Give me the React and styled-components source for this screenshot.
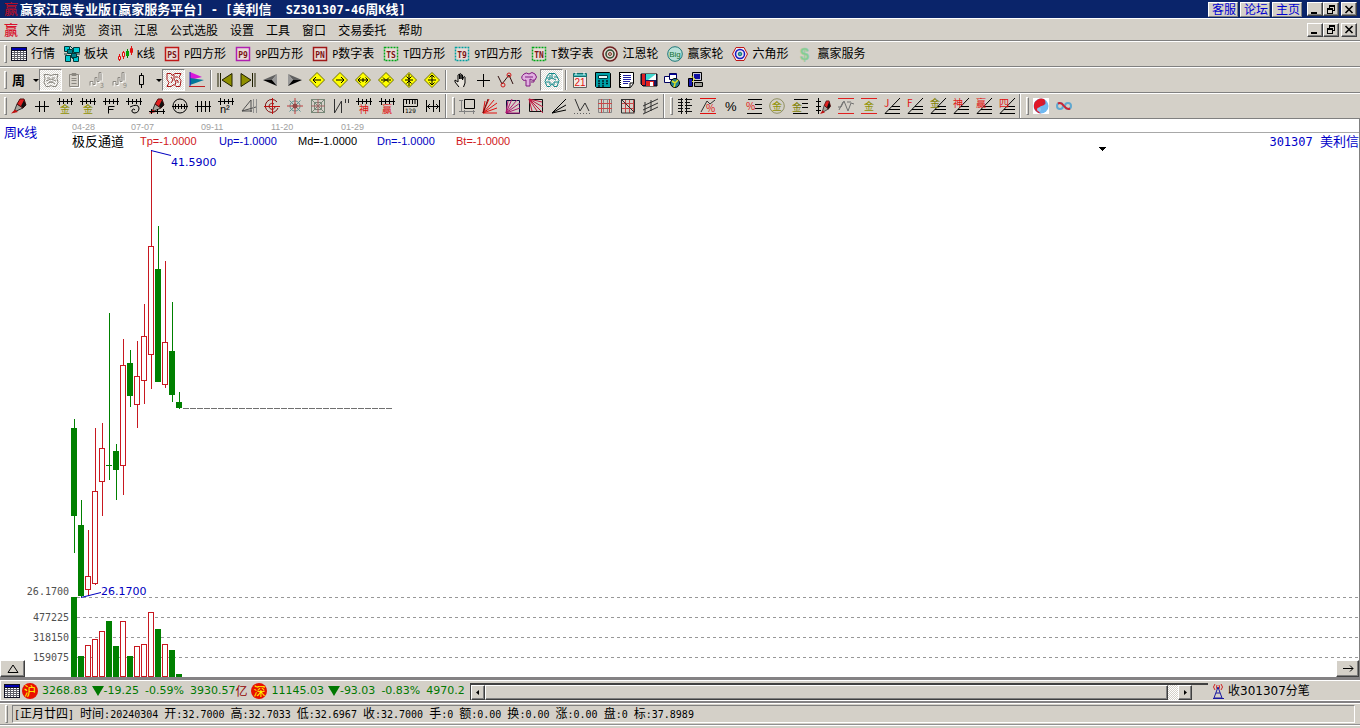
import styled, { createGlobalStyle, css } from "styled-components";

const GlobalStyle = createGlobalStyle`
  * { box-sizing: border-box; }
  body {
    margin: 0;
    background: #d4d0c8;
    color: #000;
    font-family: "Noto Sans CJK SC", sans-serif;
    font-size: 12px;
    line-height: 14px;
  }
  button {
    margin: 0;
    padding: 0;
    border: 0;
    background: none;
    color: inherit;
    font: inherit;
    flex: none;
  }
  svg { display: block; flex: none; overflow: visible; }
`;

const raised = css`
  background: #d4d0c8;
  border: 1px solid;
  border-color: #fff #404040 #404040 #fff;
  box-shadow: inset -1px -1px 0 #808080;
`;

const Page = styled.div`
  min-height: 100vh;
  display: flex;
  flex-direction: column;
`;

/* ---------- mixed text ---------- */

const Text = styled.span`
  white-space: pre;
  font-size: ${(p) => (p.$big ? 13 : 12)}px;
  color: ${(p) => p.$color || "inherit"};
  font-weight: ${(p) => (p.$bold ? 700 : 400)};
`;

const Latin = styled.span`
  font-family: "DejaVu Sans Mono", monospace;
  font-size: ${(p) => (p.$big ? 12 : 10)}px;
`;

// half-width letters use the mono font, full-width ones keep the CJK font
const Mixed = ({ children, big, bold, color }) => (
  <Text $big={big} $bold={bold} $color={color}>
    {children.split(/([\u3400-\u9fff]+)/).map((part, i) =>
      i % 2 ? (
        part
      ) : (
        <Latin key={i} $big={big}>
          {part}
        </Latin>
      )
    )}
  </Text>
);

/* ---------- title + menu ---------- */

const TitleBar = styled.header`
  height: 18px;
  display: flex;
  align-items: center;
  padding: 0 3px;
  background: #0a246a;
  color: #fff;
`;

const MenuBar = styled.nav`
  height: 23px;
  display: flex;
  align-items: center;
  padding: 0 3px;
  border-top: 1px solid #fff;
  border-bottom: 1px solid #808080;
`;

const MenuItems = styled.div`
  display: flex;
  gap: 12px;
  margin-left: 7px;
`;

const TitleText = styled.h1`
  margin: 0 0 0 1px;
  font-size: 13px;
  line-height: 18px;
`;

const Spacer = styled.div`
  flex: 1;
`;

const LinkButtons = styled.div`
  display: flex;
  gap: 2px;
  margin-right: 5px;

  button {
    width: 30px;
    height: 15px;
    padding-left: 2px;
    line-height: 12px;
    color: #0000d0;
    background: #d4d0c8;
    border: 1px solid;
    border-color: #fff #808080 #808080 #fff;
  }
`;

const WinButton = styled.button`
  ${raised}
  width: 16px;
  height: 14px;
  display: grid;
  place-items: center;
  margin-left: ${(p) => (p.$gap ? 2 : 0)}px;
`;

const WindowButtons = () => (
  <>
    <WinButton aria-label="最小化">
      <svg width="10" height="9" shapeRendering="crispEdges">
        <path d="M1 7h6v2h-6z" />
      </svg>
    </WinButton>
    <WinButton aria-label="还原">
      <svg width="10" height="9" shapeRendering="crispEdges">
        <path d="M3 0h6v6h-2v-1h1v-3h-4v1h-1zM1 3h6v6h-6zM2 5v3h4v-3z" fillRule="evenodd" />
      </svg>
    </WinButton>
    <WinButton aria-label="关闭" $gap>
      <svg width="10" height="9">
        <path d="M1.500 1l7 7M8.500 1l-7 7" stroke="#000" strokeWidth="1.600" />
      </svg>
    </WinButton>
  </>
);

const Logo = ({ dark }) => (
  <svg width="16" height="16" viewBox="0 0 16 16">
    <text x="1" y="13" fontSize="14" fontWeight="500" fill={dark ? "#b0102c" : "#d8102c"}>
      赢
    </text>
  </svg>
);

/* ---------- toolbars ---------- */

const Toolbar = styled.div`
  height: 26px;
  display: flex;
  align-items: center;
  padding-left: 4px;
  border-top: 1px solid #fff;
  border-bottom: 1px solid #808080;
`;

const Grip = styled.i`
  width: 3px;
  height: 18px;
  flex: none;
  border: 1px solid;
  border-color: #fff #808080 #808080 #fff;
`;

const Divider = styled.i`
  width: 2px;
  height: ${(p) => (p.$tall ? 24 : 20)}px;
  flex: none;
  border-left: 1px solid #808080;
  border-right: 1px solid #fff;
  margin: 0 ${(p) => (p.$tall ? 5 : 1)}px 0 ${(p) => (p.$tall ? 1 : 2)}px;
`;

const LabelItems = styled.div`
  display: flex;
  gap: 9px;
  margin-left: 4px;
`;

const LabelButton = styled.button`
  display: flex;
  align-items: center;
  gap: 4px;
`;

const IconButton = styled.button`
  width: ${(p) => p.$width || 23}px;
  height: 22px;
  display: grid;
  place-items: center;
  ${(p) =>
    p.$pressed &&
    css`
      background: repeating-conic-gradient(#fff 0 25%, #dedbd5 0 50%) 0 0 / 2px 2px;
      border: 1px solid;
      border-color: #808080 #fff #fff #808080;
    `}
`;

const comb = "M0 3.500h16M2.500 0v7M6.500 1v5M10.500 1v5M14.500 0v7";

const Glyph = ({ c = "#e01010", x = 4, y = 15, s = 10, children }) => (
  <text x={x} y={y} fontSize={s} fill={c} stroke="none">
    {children}
  </text>
);

const Framed = ({ c, t, dash }) => (
  <g>
    <rect x="1.500" y="1.500" width="13" height="13" fill="#e8dcd8" stroke={c} strokeDasharray={dash ? "2 1" : undefined} strokeWidth="1.500" />
    <text x="8" y="11.500" textAnchor="middle" fontSize="8" fontWeight="700" fontFamily="DejaVu Sans Mono" fill="#7c1414" stroke="none">
      {t}
    </text>
  </g>
);

const Diamond = ({ d }) => (
  <g>
    <path d="M8 .5L15.500 8L8 15.500L.5 8z" fill="#ffff00" stroke="#707000" />
    <path d={d} stroke="#000" />
  </g>
);

const Crayon = () => (
  <g>
    <path d="M3 14L6 6L12 10z" fill="#a8a49c" stroke="#303030" />
    <path d="M6 6L9 1L13 1L15 7L12 10z" fill="#e02020" stroke="#501010" />
    <path d="M12 10L15 7L13 2L10 8z" fill="#101010" stroke="none" />
    <path d="M0 15.500l4-4l3 2.500z" fill="#c01010" stroke="none" />
  </g>
);

const Wave = ({ n }) => (
  <g stroke="#fff" fill="none">
    <path d="M2 14.500v-4h3v3h2v-7h2v4h2v-9h2v8" />
    <path d="M1 13.500v-4h3v3h2v-7h2v4h2v-9h2v8" stroke="#8a8780" />
    <Glyph c="#8a8780" x={11} y={16} s={7}>
      {n}
    </Glyph>
  </g>
);

const Rays = ({ c = "#e01010" }) => (
  <path d="M1 15L3 3M1 15L7 1M1 15L12 2M1 15L15 5M1 15L15 10M1 15h14" stroke={c} />
);

const icons = {
  quotes: (
    <g shapeRendering="crispEdges">
      <path d="M0 1h16v14h-16z" fill="#101020" stroke="none" />
      <path d="M1 2h14v2h-14z" fill="#0000b0" stroke="none" />
      <path d="M1 5h14v9h-14z" fill="#fff" stroke="none" />
      <path d="M1 6.500h14M1 8.500h14M1 10.500h14M1 12.500h14M3.500 5v9M6.500 5v9M9.500 5v9M12.500 5v9" stroke="#606068" />
    </g>
  ),
  blocks: (
    <g stroke="#003838">
      <path d="M.5 .5h5v5h-5zM9.500 1.500h6v5h-6zM1.500 9.500h5v6h-5zM9.500 10.500h5v5h-5z" fill="#00c8d0" />
      <path d="M3.500 3.500h5v4h-5zM7.500 7.500h5v4h-5z" fill="#008088" />
      <path d="M6 0l3 3M6 9l3 4M0 8h3M13 8h3" />
    </g>
  ),
  kline: (
    <g>
      <path d="M2.500 8v7M6.500 5v8" stroke="#e01010" />
      <path d="M1.500 10.500h2v3h-2zM5.500 6.500h2v4h-2zM13.500 2.500h2v4h-2z" fill="#f0e0d8" stroke="#e01010" />
      <path d="M10.500 3v9" stroke="#008000" />
      <path d="M14.500 0v9" stroke="#e01010" />
      <path d="M9 5h3v5h-3z" fill="#00a000" stroke="none" />
    </g>
  ),
  ps: <Framed c="#c01818" t="PS" />,
  p9: <Framed c="#b020b0" t="P9" />,
  pn: <Framed c="#a01818" t="PN" />,
  ts: <Framed c="#00a818" t="TS" dash />,
  t9: <Framed c="#00a0a0" t="T9" dash />,
  tn: <Framed c="#00a818" t="TN" dash />,
  wheel: (
    <g>
      <circle cx="8" cy="8" r="7" fill="#e0d8d0" stroke="#702020" strokeWidth="1.600" />
      <circle cx="8" cy="8" r="4" stroke="#304830" strokeWidth="1.500" />
      <circle cx="8" cy="8" r="1.500" stroke="#903030" fill="#b0d8b0" />
    </g>
  ),
  big: (
    <g>
      <circle cx="8" cy="8" r="7.300" fill="#b8e0d8" stroke="#207878" />
      <text x="8" y="11" textAnchor="middle" fontSize="8" fontFamily="Liberation Sans" fill="#107030" stroke="none">
        Big
      </text>
    </g>
  ),
  hex: (
    <g>
      <path d="M4 1.500h8L15.500 8L12 14.500h-8L.5 8z" fill="#f0e8f0" stroke="#c01818" />
      <circle cx="8" cy="8" r="4.500" stroke="#1818c0" strokeWidth="1.500" />
      <circle cx="8" cy="8" r="1.800" fill="#40a0c0" stroke="#107070" />
    </g>
  ),
  dollar: (
    <text x="3" y="14" fontSize="16" fontWeight="700" fontFamily="Liberation Sans" fill="#80d090" stroke="#a8c8a8" strokeWidth=".5">
      $
    </text>
  ),

  week: (
    <text x="2" y="13" fontSize="13" fontWeight="700" fill="#000" stroke="none">
      周
    </text>
  ),
  drop: <path d="M5 7h6l-3 3z" fill="#000" stroke="none" />,
  link: (
    <g stroke="#8a8780">
      <path d="M1 2.500h4l3 1l3-1h4l-1 4l1 4l-2 4h-3l-2-1l-2 1h-3l-2-4l1-4zM4 6h3M9 6h3M3 9l5-2l5 2M4 12q4-4 8 0M6 10h4" />
    </g>
  ),
  clip: (
    <g stroke="#8a8780">
      <path d="M3.500 2.500h9v12h-9zM6 1.500h4v2h-4zM5.500 6.500h5M5.500 8.500h5M5.500 11.500h5" />
      <path d="M13.500 3v12.500h-9" stroke="#fff" />
    </g>
  ),
  wave3: <Wave n="3" />,
  wave9: <Wave n="9" />,
  candle: <path d="M6.500 3.500h4v9h-4zM8.500 1v3M8.500 13v3" stroke="#000" />,
  puzzle: (
    <path d="M1 1.500h4l1 2l3-2h6l-2 4l2 3l-1 6h-4l-2-2l-3 2h-4l2-4l-2-3zM5 5l2 3l-2 3M9 5h3M10 8q3 0 2 3M8 3v4l2 3l-1 3" stroke="#a81818" />
  ),
  flag: (
    <g>
      <path d="M1 0L13 5L1 8z" fill="#d818d8" stroke="none" />
      <path d="M1 6L15 8L1 13z" fill="#007898" stroke="none" />
      <path d="M1 0v14" stroke="#1818c0" />
      <path d="M0 14.500h16" stroke="#c02020" />
    </g>
  ),
  first: <path d="M1 1v14M3.500 1v14M15 1.500L5 8L15 14.500z" fill="#909000" stroke="#202000" />,
  last: <path d="M15 1v14M12.500 1v14M1 1.500L11 8L1 14.500z" fill="#909000" stroke="#202000" />,
  prev: (
    <g stroke="none">
      <path d="M0 8L14 2L9 8z" fill="#606060" />
      <path d="M9 8L14 2v12z" fill="#989898" />
      <path d="M0 8h9l5 6z" fill="#000" />
    </g>
  ),
  next: (
    <g stroke="none">
      <path d="M16 8L2 2L7 8z" fill="#606060" />
      <path d="M7 8L2 2v12z" fill="#989898" />
      <path d="M16 8h-9l-5 6z" fill="#000" />
    </g>
  ),
  dLeft: <Diamond d="M4 8h8M7 5L4 8l3 3" />,
  dRight: <Diamond d="M4 8h8M9 5l3 3l-3 3" />,
  dWide: <Diamond d="M3 8h10M5.500 5.500L3 8l2.500 2.500M10.500 5.500L13 8l-2.500 2.500M8 6v4" />,
  dNarrow: <Diamond d="M3 8h10M5 5.500L7.500 8L5 10.500M11 5.500L8.500 8l2.500 2.500" />,
  dShrink: <Diamond d="M4 8h8M8 2v12M5.500 4.500L8 7l2.500-2.500M5.500 11.500L8 9l2.500 2.500" />,
  dGrow: <Diamond d="M4 8h8M8 3v10M5.500 5.500L8 3l2.500 2.500M5.500 10.500L8 13l2.500-2.500" />,
  hand: (
    <path d="M5 15l-4-5v-2l3 2v-7q1-1 1.500 0v4v-5q1-1 1.500 0v5v-4q1-1 1.500 0v5l1-3q1-1 1.500 0v6l-1.500 4" fill="#e8e4dc" stroke="#000" transform="translate(2 0)" />
  ),
  cross: <path d="M8.500 2v13M2 8.500h13" stroke="#000" />,
  zigzag: (
    <g>
      <path d="M0 4l4 8l7-9l4 9" stroke="#301010" />
      <circle cx="5" cy="13" r="2" stroke="#d01818" />
      <circle cx="11" cy="3" r="2" stroke="#d01818" />
    </g>
  ),
  cloud: (
    <g stroke="#801880">
      <path d="M2 8q-3-3 1-6q2-2 5 0q3-3 6 0q3 3 0 6q-3 1-5-1v7h-4v-6q-2 1-3 0zM4 5h8" fill="#e0b0e0" />
      <path d="M10 10h3v-2" />
    </g>
  ),
  brain: (
    <path d="M8 1v5l-4 2M8 6l4 2M5 1.500h6l2 3l2 4l-2 6h-3l-2-3l-2 3h-3l-2-5l2-5zM3 6h3v-3M2 10h4v3M13 5h-3M14 10h-4v3" stroke="#108888" />
  ),
  calendar: (
    <g>
      <path d="M1.500 3.500h13v12h-13z" fill="#f4ece8" stroke="#606060" />
      <path d="M1.500 1.500h13v3h-13z" fill="#50b8b8" stroke="#107070" />
      <path d="M4 0v3M12 0v3" stroke="#fff" />
      <text x="8" y="14" textAnchor="middle" fontSize="10" fontFamily="Liberation Sans" fill="#e01010" stroke="none">
        21
      </text>
    </g>
  ),
  calc: (
    <g>
      <path d="M.5 .5h14l1 1v14h-14l-1-1z" fill="#00a0a8" stroke="#000" />
      <path d="M3.500 3.500h9v3h-9z" fill="#e8f8f8" stroke="#003840" />
      <path d="M3 9h2M7 9h2M11 9h2M3 11.500h2M7 11.500h2M11 11.500h2M3 14h2M7 14h2" stroke="#002028" strokeWidth="1.500" />
    </g>
  ),
  note: (
    <g>
      <path d="M1.500 .5h14v11l-3 4h-11z" fill="#fff" stroke="#000" />
      <path d="M5 3.500h8M5 5.500h8M5 7.500h8M5 9.500h7M5 11.500h5" stroke="#2020a0" />
      <path d="M2 0v16" stroke="#000" strokeDasharray="1 1" strokeWidth="2" />
      <path d="M12 15v-4h4" stroke="#000" />
    </g>
  ),
  disk: (
    <g>
      <path d="M0 2h16v12h-14l-2-2z" fill="#181860" stroke="#000" />
      <path d="M1 2h3v11h-3z" fill="#e02020" stroke="none" />
      <path d="M5 2h10v6h-10z" fill="#40d8d0" stroke="none" />
      <path d="M15 2v6h-8z" fill="#fff" stroke="none" />
      <path d="M5 9h8v5h-8z" fill="#e02020" stroke="none" />
      <path d="M9 10h3v4h-3z" fill="#fff" stroke="none" />
    </g>
  ),
  copyNet: (
    <g>
      <path d="M.5 4.500h7v6h-7z" fill="#fff" stroke="#000060" />
      <path d="M5.500 1.500h7v6h-7z" fill="#fff" stroke="#000060" />
      <path d="M6 2.500h6" stroke="#0000a0" />
      <circle cx="11" cy="11" r="4.500" fill="#208090" stroke="#000" />
      <path d="M8 9l3 2l3-3M10 15l1-3" stroke="#e0e020" strokeWidth="1.600" />
    </g>
  ),
  pc: (
    <g>
      <path d="M5.500 .5h9v8h-9z" fill="#c8c8d8" stroke="#000" />
      <path d="M7 2h6v5h-6z" fill="#1010a0" stroke="none" />
      <path d="M7.500 10.500h8v4h-8z" fill="#a0a098" stroke="#000" />
      <path d="M1.500 6.500h4v8h-4z" fill="#1818b0" stroke="#000" />
      <path d="M4 4l4 3l-3 3" stroke="#e0e020" />
    </g>
  ),

  crayon: <Crayon />,
  ticks2: <path d="M1 8.500h14M5.500 3v11M10.500 3v11" stroke="#000" />,
  ticks4: <path d="M0 8.500h16M2.500 3v11M6.500 3v11M10.500 3v11M14.500 3v11" stroke="#000" />,
  combGold: (
    <g>
      <path d={comb} stroke="#000" />
      <Glyph c="#909000" x={3}>金</Glyph>
    </g>
  ),
  combF: (
    <g>
      <path d={comb} stroke="#000" />
      <path d="M5.500 15.500v-7h6M5.500 11.500h5" stroke="#000" />
    </g>
  ),
  combSpiral: (
    <g>
      <path d={comb} stroke="#000" />
      <path d="M4 9q8-4 9 1q0 5-5 5q-3-1-2-3q2-2 3 0" stroke="#000" />
    </g>
  ),
  crayonTicks: (
    <g>
      <Crayon />
      <path d="M0 13.500h16M2.500 11v5M8.500 11v5M14.500 11v5" stroke="#000" />
    </g>
  ),
  ellipse: (
    <g stroke="#000">
      <circle cx="8" cy="8" r="7" />
      <path d="M0 8.500h16M3.500 6v5M6.500 6v5M9.500 6v5M12.500 6v5" />
    </g>
  ),
  combN: (
    <g>
      <path d={comb} stroke="#000" />
      <text x="2" y="15" fontSize="11" fontFamily="Liberation Sans" fill="#000" stroke="none">n²</text>
    </g>
  ),
  slants: (
    <g stroke="#505050">
      <path d="M1 13L10 2v12M1 13l14-4M1 13h10" />
      <path d="M12.500 1v14M15.500 1v14" stroke="#909090" />
    </g>
  ),
  target: (
    <g stroke="#c01010">
      <path d="M14 10A6.500 6.500 0 1 1 13 4M11 9A3 3 0 1 1 10 6" stroke="#801010" />
      <path d="M0 8.500h16M8.500 0v16" />
    </g>
  ),
  star: (
    <g stroke="#609090">
      <circle cx="8" cy="8" r="5" />
      <path d="M2.500 2.500l11 11M13.500 2.500l-11 11" />
      <path d="M8 0v16M0 8h16" stroke="#c04040" />
      <circle cx="8" cy="8" r="2.500" fill="#904848" stroke="none" />
    </g>
  ),
  web: (
    <g stroke="#788878">
      <path d="M1.500 1.500h13v13h-13zM4.500 4.500h7v7h-7zM1 1l14 14M15 1L1 15" />
      <path d="M8 1v14M1 8h14" stroke="#a06060" />
    </g>
  ),
  parallel: <path d="M1.500 1v14L8.500 3v12M12.500 1v4M15.500 1v4" stroke="#303030" />,
  combShen: (
    <g>
      <path d={comb} stroke="#000" />
      <Glyph x={3}>神</Glyph>
    </g>
  ),
  combWin: (
    <g>
      <path d={comb} stroke="#000" />
      <Glyph x={3}>赢</Glyph>
    </g>
  ),
  ruler: (
    <g stroke="#000">
      <path d="M1.500 1v14M1 1.500h14.500v7M1 8.500h14M4.500 2v4M7.500 2v4M10.500 2v4M13 2v4" />
      <text x="3" y="15" fontSize="6" fontFamily="DejaVu Sans Mono" fill="#000" stroke="none">129</text>
    </g>
  ),
  span: <path d="M1.500 2v12M14.500 2v12M8.500 2v12M2 8.500h12M5 6L2.500 8.500L5 11M11 6l2.500 2.500L11 11" stroke="#000" />,

  crop: (
    <g>
      <path d="M0 2.500h4M2.500 2v11M0 13.500h16M5.500 12v4M14.500 12v4" stroke="#808080" />
      <path d="M5.500 1.500h10v9h-10z" stroke="#000" />
    </g>
  ),
  fanRed: (
    <g>
      <Rays />
      <path d="M1 15L6 1" stroke="#601010" />
    </g>
  ),
  fanBox: (
    <g>
      <path d="M1.500 2.500h13v13h-13z" stroke="#101040" />
      <Rays c="#b01870" />
    </g>
  ),
  fanBoxR: (
    <g>
      <path d="M1.500 1.500h13v12h-13z" stroke="#101010" />
      <path d="M1 1l14 14M1 1l8 12M1 1l14 8M1 1l3 12M1 1l13 3" stroke="#c01840" />
    </g>
  ),
  fanBlack: <path d="M1 15L15 1M1 15L15 7M1 15L15 12" stroke="#000" />,
  vee: (
    <g>
      <path d="M1 1l5 12l5-8l4 8" stroke="#303030" />
      <path d="M0 15.500h16" stroke="#606060" strokeDasharray="1 2" />
    </g>
  ),
  grid: (
    <g>
      <path d="M1.500 1.500h13v13h-13zM6.500 1v14M10.500 1v14" stroke="#888" />
      <path d="M1 5.500h14M1 10.500h14M4.500 1v14M12.500 1v14" stroke="#c84848" />
    </g>
  ),
  gridDark: (
    <g>
      <path d="M5.500 1v14M13.500 1v14M1 5.500h14M1 10.500h14M9.500 1v14" stroke="#c84848" />
      <path d="M1.500 1.500h13v13M1.500 1v14h13M2 2l12 12" stroke="#303030" />
    </g>
  ),
  channel: <path d="M0 8L15 1M0 12L15 5M0 16L15 9M2 4v11M8 2v11" stroke="#303030" />,
  levels: <path d="M1 1.500h5M1 4.500h5M1 7.500h5M1 10.500h5M1 13.500h5M8 1.500h7M8 4.500h5M8 7.500h7M8 10.500h5M8 13.500h7M4.500 0v16M9.500 0v16" stroke="#101010" />,
  percentTop: (
    <g>
      <path d="M0 .5h16M0 15.500h16" stroke="#e01010" />
      <path d="M1 14L7 3l3 3l5-4" stroke="#303030" />
      <Glyph x={6} y={14}>%</Glyph>
    </g>
  ),
  percent: (
    <text x="2" y="13" fontSize="13" fontFamily="Liberation Sans" fill="#000" stroke="none">%</text>
  ),
  percentLines: (
    <g>
      <path d="M2 1.500h14M9 6.500h7M9 10.500h7M1 15.500h15" stroke="#000" />
      <Glyph x={0} y={12}>%</Glyph>
    </g>
  ),
  coin: (
    <g>
      <circle cx="8" cy="8" r="7.300" stroke="#909060" />
      <Glyph c="#909000" x={3} y={12}>金</Glyph>
    </g>
  ),
  goldLines: (
    <g>
      <path d="M2 1.500h14M10 5.500h6M10 9.500h6M1 15.500h15" stroke="#000" />
      <Glyph c="#808000" x={0} y={13}>金</Glyph>
    </g>
  ),
  crayonAxis: (
    <g>
      <g transform="translate(5 2) scale(.7 .9)">
        <Crayon />
      </g>
      <path d="M3.500 0v16M1 3.500h5M1 8.500h5M1 12.500h5" stroke="#000" />
    </g>
  ),
  sine: (
    <g>
      <path d="M0 .5h16M0 15.500h16" stroke="#e02020" />
      <path d="M0 9h3L6 3l4 10L13 5l3 1M1 12L5 4M9 4h4" stroke="#707070" />
    </g>
  ),
  goldBand: (
    <g>
      <path d="M0 .5h16M0 15.500h16" stroke="#e02020" />
      <Glyph c="#909000" x={3} y={12}>金</Glyph>
    </g>
  ),
  fanJ: <FanGlyph t="J" />,
  fanF: <FanGlyph t="F" />,
  fanGold: <FanGlyph t="金" c="#808000" />,
  fanShen: <FanGlyph t="神" />,
  fanWin: <FanGlyph t="赢" />,
  fanFour: <FanGlyph t="四" />,
  taiji: (
    <g stroke="none">
      <path d="M0 0h16v16h-16z" fill="#fff" />
      <circle cx="8" cy="8" r="7.500" fill="#70b8f0" />
      <path d="M11 1A7.500 7.500 0 1 0 8 15.500A4 4 0 0 1 8 8A4 4 0 0 0 11 1z" fill="#e01828" />
      <circle cx="6" cy="11.500" r="2" fill="#90c8f0" />
      <circle cx="11" cy="5" r="1.500" fill="#c02040" />
    </g>
  ),
  infinity: (
    <g strokeWidth="2">
      <circle cx="4" cy="8" r="3" stroke="#60a8d0" />
      <circle cx="12" cy="8" r="3" stroke="#60a8d0" />
      <path d="M2 5.500Q5 4 8 8Q11 12 14 10.500" stroke="#d02030" />
    </g>
  ),
};

function FanGlyph({ t, c }) {
  return (
    <g>
      <path d="M1 15.500L16 0M8 8.500h8M5 11.500h11M1 15.500h15" stroke="#000" />
      <Glyph x={0} y={9} c={c}>
        {t}
      </Glyph>
    </g>
  );
}

const Icon = ({ name }) => (
  <svg width="16" height="16" viewBox="0 0 16 16" fill="none">
    {icons[name]}
  </svg>
);

const labelTools = [
  ["quotes", "行情"],
  ["blocks", "板块"],
  ["kline", "K线"],
  ["ps", "P四方形"],
  ["p9", "9P四方形"],
  ["pn", "P数字表"],
  ["ts", "T四方形"],
  ["t9", "9T四方形"],
  ["tn", "T数字表"],
  ["wheel", "江恩轮"],
  ["big", "赢家轮"],
  ["hex", "六角形"],
  ["dollar", "赢家服务"],
];

const viewTools =
  "week drop link* clip wave3 wave9 candle drop puzzle* flag | first last prev next dLeft dRight dWide dNarrow dShrink dGrow | hand cross zigzag cloud brain* | calendar calc note disk copyNet pc".split(" ");

const drawTools =
  "crayon ticks2 combGold combGold combF combSpiral crayonTicks ellipse ticks4 combN slants target star web parallel combShen combWin ruler span || crop fanRed fanBox fanBoxR fanBlack vee grid gridDark channel || levels percentTop percent percentLines coin goldLines crayonAxis sine goldBand fanJ fanF fanGold fanShen fanWin fanFour || taiji infinity".split(" ");

// buttons with a drop-down arrow beside them are narrower
const toolWidths = { week: 21, candle: 20, drop: 11 };

const ToolIcons = ({ tools }) =>
  tools.map((tool, i) => {
    if (tool === "|") return <Divider key={i} />;
    if (tool === "||")
      return [<Divider key={i} $tall />, <Grip key={`g${i}`} />];
    const name = tool.replace("*", "");
    return (
      <IconButton key={i} aria-label={name} $pressed={tool !== name} $width={toolWidths[name]}>
        <Icon name={name} />
      </IconButton>
    );
  });

/* ---------- chart ---------- */

// [wick top, body top, body bottom, wick bottom, volume top, rising]
const bars = [
  [419, 428, 516, 553, 597, 0],
  [500, 525, 596, 597, 656, 0],
  [530, 576, 590, 596, 645, 1],
  [428, 491, 584, 585, 639, 1],
  [423, 448, 482, 516, 631, 1],
  [313, 465, 466, 480, 621, 0],
  [444, 451, 470, 500, 646, 0],
  [339, 365, 466, 495, 621, 1],
  [350, 363, 396, 407, 656, 0],
  [341, 376, 405, 428, 646, 1],
  [304, 336, 381, 404, 644, 1],
  [150, 246, 355, 389, 612, 1],
  [226, 269, 382, 382, 629, 0],
  [261, 342, 385, 388, 644, 1],
  [302, 351, 395, 402, 650, 0],
  [392, 402, 408, 409, 674, 0],
];

const levels = [
  [597, 591, "26.1700"],
  [617, 617, "477225"],
  [637, 637, "318150"],
  [657, 657, "159075"],
];

const ChartArea = styled.main`
  position: relative;
  flex: 1;
  background: #fff;
  border-right: 1px solid #808080;
`;

const DateRow = styled.div`
  height: 14px;
  margin-left: 72px;
  padding-top: 2px;
  display: flex;
  border-bottom: 1px solid #a8a8a8;
  font: 9px/12px "Liberation Sans", sans-serif;
  color: #a0a0a0;

  span { width: 70px; }
  span:first-child { width: 59px; }
`;

const Period = styled.div`
  position: absolute;
  left: 4px;
  top: 6px;
`;

const LegendRow = styled.div`
  display: flex;
  align-items: center;
  height: 16px;
  margin-left: 72px;
`;

const LegendName = styled.span`
  width: 68px;
  font-size: 13px;
`;

const LegendValue = styled.span`
  width: 79px;
  font: 11px/14px "Liberation Sans", sans-serif;
  color: ${(p) => p.$color};
`;

const Plot = styled.svg`
  width: 100%;
  height: 528px;
`;

const CornerButton = styled.button`
  ${raised}
  position: absolute;
  bottom: 0;
  ${(p) => (p.$right ? "right: 0;" : "left: 0;")}
  width: ${(p) => (p.$right ? 23 : 25)}px;
  height: 17px;
  display: grid;
  place-items: center;
`;

const Bar = ({ i, bar }) => {
  const [top, open, close, bottom, vol, up] = bar;
  const x = 71 + i * 7;
  if (!up)
    return (
      <g fill="#008000">
        <rect x={x + 3} y={top} width="1" height={bottom - top} />
        <rect x={x} y={open} width="6" height={close - open} />
        <rect x={x} y={vol} width="6" height={677 - vol} />
      </g>
    );
  return (
    <g fill="#c81820">
      <rect x={x + 3} y={top} width="1" height={open - top} />
      <rect x={x + 3} y={close} width="1" height={bottom - close} />
      <rect x={x + 0.5} y={open + 0.5} width="5" height={close - open - 1} fill="#fff" stroke="#c81820" />
      <rect x={x + 0.5} y={vol + 0.5} width="5" height={676 - vol} fill="#fff" stroke="#c81820" />
    </g>
  );
};

const Chart = () => (
  <ChartArea>
    <Period>
      <Mixed big color="#0000c8">周K线</Mixed>
    </Period>
    <DateRow>
      <span>04-28</span>
      <span>07-07</span>
      <span>09-11</span>
      <span>11-20</span>
      <span>01-29</span>
    </DateRow>
    <LegendRow>
      <LegendName>极反通道</LegendName>
      <LegendValue $color="#d01820">Tp=-1.0000</LegendValue>
      <LegendValue $color="#0000c0">Up=-1.0000</LegendValue>
      <LegendValue $color="#000">Md=-1.0000</LegendValue>
      <LegendValue $color="#0000c0">Dn=-1.0000</LegendValue>
      <LegendValue $color="#d01820">Bt=-1.0000</LegendValue>
      <Spacer />
      <Mixed big color="#0000c8">301307 美利信</Mixed>
    </LegendRow>
    <Plot>
      <g transform="translate(0 -149)">
        <g shapeRendering="crispEdges">
          {levels.map(([y]) => (
            <line key={y} x1="77" x2="100%" y1={y + 0.5} y2={y + 0.5} stroke="#989898" strokeDasharray="3 3" />
          ))}
          <line x1="183" x2="392" y1="408.500" y2="408.500" stroke="#707070" strokeDasharray="6 1" />
          {bars.map((bar, i) => (
            <Bar key={i} i={i} bar={bar} />
          ))}
          <path d="M1099 147h7v1h-1v1h-1v1h-1v1h-1v-1h-1v-1h-1v-1h-1z" />
        </g>
        <path d="M151 150.500L171 155.500M81 597.500L101 592.500" stroke="#0000c0" />
        <g fill="#0000c0" fontFamily="DejaVu Sans" fontSize="11">
          <text x="171" y="166">41.5900</text>
          <text x="101" y="595">26.1700</text>
        </g>
        <g fill="#505050" fontFamily="DejaVu Sans Mono" fontSize="10" textAnchor="end">
          {levels.map(([, y, label]) => (
            <text key={label} x="69" y={y + 4}>{label}</text>
          ))}
        </g>
      </g>
    </Plot>
    <CornerButton aria-label="展开">
      <svg width="12" height="10">
        <path d="M1 8.500L6 1L11 8.500z" fill="none" stroke="#000" />
      </svg>
    </CornerButton>
    <CornerButton aria-label="向右" $right>
      <svg width="12" height="9">
        <path d="M1 4.500h10M8 1.500l3 3l-3 3" fill="none" stroke="#000" />
      </svg>
    </CornerButton>
  </ChartArea>
);

/* ---------- status bars ---------- */

const IndexBar = styled.div`
  height: 26px;
  display: flex;
  align-items: center;
  padding: 1px 3px 0 4px;
  border-top: 3px solid #848284;
  border-bottom: 2px solid #848284;
  box-shadow: inset 0 1px 0 #fff, inset 0 -1px 0 #fff, inset 1px 0 0 #fff;
`;

const Badge = styled.span`
  width: 16px;
  height: 16px;
  flex: none;
  margin: 0 4px 0 ${(p) => (p.$gap ? 4 : 2)}px;
  border-radius: 50%;
  background: #e81000;
  color: #ffff00;
  text-align: center;
  line-height: 15px;
`;

const Quote = styled.span`
  display: flex;
  align-items: center;
  gap: 6px;
  font: 11px/16px "DejaVu Sans", sans-serif;
  color: #007800;
  white-space: nowrap;

  em {
    font: 12px/16px "Noto Sans CJK SC", sans-serif;
    color: #900000;
  }
  span { display: flex; align-items: center; }
  svg { margin-left: 4px; }
`;

const Scroll = styled.div`
  flex: 1;
  height: 17px;
  display: flex;
  margin-left: 5px;
  border: solid #404040;
  border-width: 2px 0 0 1px;
`;

const ScrollButton = styled.button`
  ${raised}
  width: 14px;
  display: grid;
  place-items: center;
`;

const Thumb = styled.div`
  ${raised}
  flex: 1;
`;

const Track = styled.div`
  width: 10px;
  background: repeating-conic-gradient(#fff 0 25%, #d4d0c8 0 50%) 0 0 / 2px 2px;
`;

const ScrollEnd = styled.div`
  width: 16px;
`;

const Feed = styled.div`
  width: 149px;
  display: flex;
  align-items: center;
  gap: 4px;
  padding-left: 4px;
  font-family: "DejaVu Sans", "Noto Sans CJK SC", sans-serif;
`;

const InfoBar = styled.footer`
  height: 22px;
  display: flex;
  align-items: flex-start;
  padding: 2px 5px 0;
  border-bottom: 1px solid #909090;
  box-shadow: inset 0 1px 0 #fff, 0 1px 0 #fff;
`;

const InfoText = styled.div`
  flex: 1;
  height: 18px;
  margin-left: 4px;
  padding: 0 1px;
  border: 1px solid;
  border-color: #808080 #fff #fff #808080;
`;

const BottomEdge = styled.div`
  height: 3px;
`;

const Down = () => (
  <svg width="12" height="10">
    <path d="M0 0h12l-6 10z" fill="#007800" />
  </svg>
);

export default function App() {
  return (
    <Page>
      <GlobalStyle />
      <TitleBar>
        <Logo dark />
        <TitleText>
          <Mixed big bold>{"赢家江恩专业版[赢家服务平台] - [美利信  SZ301307-46周K线]"}</Mixed>
        </TitleText>
        <Spacer />
        <LinkButtons>
          <button>客服</button>
          <button>论坛</button>
          <button>主页</button>
        </LinkButtons>
        <WindowButtons />
      </TitleBar>
      <MenuBar>
        <Logo />
        <MenuItems>
          {["文件", "浏览", "资讯", "江恩", "公式选股", "设置", "工具", "窗口", "交易委托", "帮助"].map((m) => (
            <button key={m}>{m}</button>
          ))}
        </MenuItems>
        <Spacer />
        <WindowButtons />
      </MenuBar>
      <Toolbar>
        <Grip />
        <LabelItems>
          {labelTools.map(([icon, label]) => (
            <LabelButton key={label}>
              <Icon name={icon} />
              <Mixed>{label}</Mixed>
            </LabelButton>
          ))}
        </LabelItems>
      </Toolbar>
      <Toolbar>
        <Grip />
        <ToolIcons tools={viewTools} />
      </Toolbar>
      <Toolbar>
        <Grip />
        <ToolIcons tools={drawTools} />
      </Toolbar>
      <Chart />
      <IndexBar>
        <Icon name="quotes" />
        <Badge>沪</Badge>
        <Quote>
          <span>3268.83<Down />-19.25</span>
          <span>-0.59%</span>
          <span>3930.57<em>亿</em></span>
        </Quote>
        <Badge $gap>深</Badge>
        <Quote>
          <span>11145.03<Down />-93.03</span>
          <span>-0.83%</span>
          <span>4970.2</span>
        </Quote>
        <Scroll>
          <ScrollButton aria-label="向左滚动">
            <svg width="3" height="5"><path d="M3 0v5l-3-2.500z" /></svg>
          </ScrollButton>
          <Thumb />
          <Track />
          <ScrollButton aria-label="向右滚动">
            <svg width="3" height="5"><path d="M0 0v5l3-2.500z" /></svg>
          </ScrollButton>
          <ScrollEnd />
        </Scroll>
        <Feed>
          <svg width="12" height="16" fill="none">
            <path d="M3 1q-3 3 0 6M9 1q3 3 0 6M5 2q-1 2 0 4M7 2q1 2 0 4" stroke="#d02020" />
            <path d="M6 4L2 15h8zM4 10h4M1 15.500h11" stroke="#1818a0" />
          </svg>
          <span>收301307分笔</span>
        </Feed>
      </IndexBar>
      <InfoBar>
        <Grip />
        <InfoText>
          <Mixed>[正月廿四] 时间:20240304 开:32.7000 高:32.7033 低:32.6967 收:32.7000 手:0 额:0.00 换:0.00 涨:0.00 盘:0 标:37.8989</Mixed>
        </InfoText>
      </InfoBar>
      <BottomEdge />
    </Page>
  );
}
